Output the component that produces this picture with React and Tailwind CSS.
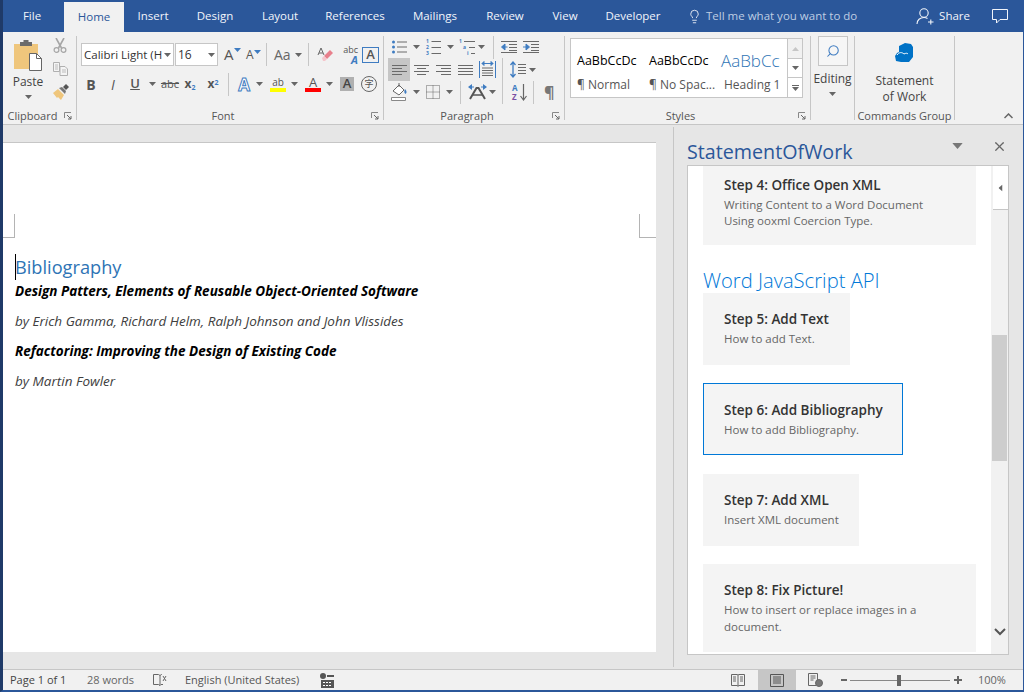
import React from "react";
import { Lightbulb, X, Search } from "lucide-react";

const GRAY = "#6a6a6a";

function Caret({ className = "", color = "#666" }) {
  return (
    <svg width="7" height="4" viewBox="0 0 7 4" className={`shrink-0 ${className}`}>
      <path d="M0 0h7L3.5 4z" fill={color} />
    </svg>
  );
}

function Sep({ className = "" }) {
  return <div className={`w-px h-[23px] bg-[#c6c6c6] shrink-0 ${className}`} />;
}

function Launcher() {
  return (
    <svg width="8" height="8" viewBox="0 0 8 8" className="shrink-0">
      <path d="M.5 6V.5H7" fill="none" stroke="#888" />
      <path d="M3 3l4 4M7 4v3H4" fill="none" stroke="#666" />
    </svg>
  );
}

function Lines({ className = "", rows, w = 15 }) {
  return (
    <svg width={w} height="12" viewBox={`0 0 ${w} 12`} className={`shrink-0 ${className}`}>
      {rows.map(([x, len], i) => (
        <path key={i} d={`M${x} ${1.5 + i * 3}h${len}`} stroke={GRAY} strokeWidth="1" />
      ))}
    </svg>
  );
}

function Bullets({ className = "" }) {
  return (
    <svg width="15" height="14" viewBox="0 0 15 14" className={`shrink-0 ${className}`}>
      {[2, 7, 12].map((y) => (
        <g key={y}>
          <circle cx="1.5" cy={y} r="1.5" fill="#3f7cc1" />
          <path d={`M5 ${y}h10`} stroke={GRAY} />
        </g>
      ))}
    </svg>
  );
}

function Numbering({ className = "" }) {
  return (
    <svg width="15" height="18" viewBox="0 0 15 18" className={`shrink-0 ${className}`}>
      {[1, 7, 13].map((y, i) => (
        <g key={y}>
          <text x="0" y={y + 4} fontSize="5" fontWeight="700" fill="#3f7cc1">{i + 1}</text>
          <path d={`M5.500 ${y + 2.5}h9.500`} stroke={GRAY} />
        </g>
      ))}
    </svg>
  );
}

function Multilevel({ className = "" }) {
  return (
    <svg width="16" height="18" viewBox="0 0 16 18" className={`shrink-0 ${className}`}>
      <text x="0" y="5" fontSize="5" fontWeight="700" fill="#3f7cc1">1</text>
      <path d="M5 3.500h11" stroke={GRAY} />
      <text x="4" y="11" fontSize="5" fontWeight="700" fill="#3f7cc1">a</text>
      <path d="M10 9.500h6" stroke={GRAY} />
      <text x="8" y="17" fontSize="5" fontWeight="700" fill="#3f7cc1">i</text>
      <path d="M12 15.500h4" stroke={GRAY} />
    </svg>
  );
}

function Indent({ className = "", flip = false }) {
  return (
    <svg width="16" height="12" viewBox="0 0 16 12" className={`shrink-0 ${className}`}>
      <path d="M0 .5h16M8 3.500h8M8 6.500h8M8 9.500h8M0 11.500h16" stroke={GRAY} />
      {flip ? (
        <path d="M0 6h4M3 3l3.500 3L3 9z" fill="#3f7cc1" stroke="#3f7cc1" />
      ) : (
        <path d="M6.500 6h-3M4 3L.5 6 4 9z" fill="#3f7cc1" stroke="#3f7cc1" />
      )}
    </svg>
  );
}

function Scissors({ className = "" }) {
  return (
    <svg width="14" height="15" viewBox="0 0 14 15" className={`shrink-0 ${className}`}>
      <path d="M3 0l5.500 10M11 0L5.500 10" fill="none" stroke="#a6a6a6" strokeWidth="1.600" />
      <circle cx="3.500" cy="12" r="2.400" fill="none" stroke="#a6a6a6" strokeWidth="1.200" />
      <circle cx="10.500" cy="12" r="2.400" fill="none" stroke="#a6a6a6" strokeWidth="1.200" />
    </svg>
  );
}

function CopyIcon({ className = "" }) {
  return (
    <svg width="15" height="14" viewBox="0 0 15 14" className={`shrink-0 ${className}`}>
      <path d="M.5.500h6v9h-6z M7 4.500h5l2.500 2.500v6.500h-7.500z" fill="#f4f4f4" stroke="#b0b0b0" />
      <path d="M2 3h3M2 5h3M2 7h3M9 8h4M9 10h4" stroke="#bcbcbc" />
    </svg>
  );
}

function Painter({ className = "" }) {
  return (
    <svg width="16" height="16" viewBox="0 0 16 16" className={`shrink-0 ${className}`}>
      <path d="M0 9l5-4 6 6-3 5-3-3-1 1z" fill="#efc67c" />
      <path d="M6 4l3-1 4 4-1 3z" fill="#777" />
      <path d="M10 3l3-3 3 3-3 3z" fill="#555" />
    </svg>
  );
}

function PasteIcon() {
  return (
    <svg width="28" height="31" viewBox="0 0 28 31" className="shrink-0">
      <path d="M0 4h24v25H0z" fill="#efc67c" />
      <path d="M6 4V2h3.500V0h5v2H18v4H6z" fill="#6b6b6b" />
      <path d="M15.500 13.500h7l5 5v12h-12z" fill="#fff" stroke="#666" />
      <path d="M22.500 13.500v5h5" fill="none" stroke="#666" />
    </svg>
  );
}

function Align({ kind, className = "" }) {
  const rows = {
    left: [[0, 15], [0, 10], [0, 15], [0, 10]],
    center: [[0, 15], [3, 9], [0, 15], [3, 9]],
    right: [[0, 15], [5, 10], [0, 15], [5, 10]],
    justify: [[0, 15], [0, 15], [0, 15], [0, 15]],
  }[kind];
  return <Lines rows={rows} className={className} />;
}

function Distributed({ className = "" }) {
  return (
    <svg width="17" height="17" viewBox="0 0 17 17" className={`shrink-0 ${className}`}>
      <path d="M.5 0v17M16.500 0v17" stroke="#3f7cc1" />
      <path d="M3 2.500h11M3 2.500l2-2v4zM14 2.500l-2-2v4z" stroke="#3f7cc1" fill="#3f7cc1" />
      <path d="M3 7h11M3 9.500h11M3 12h11M3 14.500h11" stroke={GRAY} />
    </svg>
  );
}

function LineSpacing({ className = "" }) {
  return (
    <svg width="16" height="17" viewBox="0 0 16 17" className={`shrink-0 ${className}`}>
      <path d="M3 1v15M.5 4L3 1l2.500 3M.5 13L3 16l2.500-3" fill="none" stroke="#3f7cc1" strokeWidth="1.300" />
      <path d="M8 3.500h8M8 6.500h8M8 9.500h8M8 12.500h8" stroke={GRAY} />
    </svg>
  );
}

function Shading({ className = "" }) {
  return (
    <svg width="17" height="18" viewBox="0 0 17 18" className={`shrink-0 ${className}`}>
      <path d="M2 8l6-6 5 5-5 5z" fill="#fff" stroke="#666" />
      <path d="M8 0v4" stroke="#666" />
      <path d="M14 6c2 2 2 4 .5 5C13 10 13 8 14 6z" fill="#3f7cc1" />
      <path d="M.5 14.500h14v3H.5z" fill="#fff" stroke="#888" />
    </svg>
  );
}

function Borders({ className = "" }) {
  return (
    <svg width="14" height="14" viewBox="0 0 14 14" className={`shrink-0 ${className}`}>
      <path d="M.5.500h13v13H.5zM7 .5v13M.5 7h13" fill="none" stroke="#666" strokeDasharray="1 1" />
    </svg>
  );
}

function TextDir({ className = "" }) {
  return (
    <svg width="19" height="16" viewBox="0 0 19 16" className={`shrink-0 ${className}`}>
      <path d="M2 15L8.500 4h2L17 15" fill="none" stroke="#555" strokeWidth="2" />
      <path d="M5 11h9" stroke="#555" strokeWidth="1.500" />
      <path d="M0 3l4-3v6zM19 3l-4-3v6z" fill="#3f7cc1" />
      <path d="M3 3h3M13 3h3" stroke="#3f7cc1" />
    </svg>
  );
}

function SortIcon({ className = "" }) {
  return (
    <div className={`flex shrink-0 items-center ${className}`}>
      <div className="flex flex-col text-[8px] leading-[9px] font-bold w-[8px]">
        <span className="text-[#3f7cc1]">A</span>
        <span className="text-[#7a4fa3]">Z</span>
      </div>
      <svg width="7" height="17" viewBox="0 0 7 17">
        <path d="M3.500 0v16M.5 12l3 4 3-4" fill="none" stroke="#666" strokeWidth="1.200" />
      </svg>
    </div>
  );
}

function Group({ widthClass, label, launcher, children }) {
  return (
    <div className={`${widthClass} shrink-0 mt-[4px] h-[84px] border-r border-[#c6c6c6] flex flex-col`}>
      <div className="h-[73px] shrink-0">{children}</div>
      <div className="h-[14px] shrink-0 flex items-center text-[11px] text-[#555]">
        <div className="flex-1 text-center whitespace-nowrap">{label}</div>
        {launcher && <div className="mr-[4px] ml-[2px]"><Launcher /></div>}
      </div>
    </div>
  );
}

function Tab({ widthClass, active, children }) {
  return (
    <div
      className={`${widthClass} shrink-0 flex items-center justify-center text-[11.500px] ${
        active ? "h-[30px] mt-[2px] bg-[#f1f1f1] text-[#2b579a]" : "h-[32px] text-[#f2f5fa]"
      }`}
    >
      {children}
    </div>
  );
}

function StyleItem({ sample, label, sampleClass, labelClass = "" }) {
  return (
    <div className="w-[72px] shrink-0 flex flex-col pl-[6px]">
      <div className={`w-[59px] h-[34px] pt-[12px] whitespace-nowrap leading-[20px] ${sampleClass}`}>{sample}</div>
      <div className={`text-[12px] text-[#555] whitespace-nowrap mt-[3px] ${labelClass}`}>{label}</div>
    </div>
  );
}

function StepCard({ title, desc, widthClass, selected }) {
  return (
    <div
      className={`${widthClass} h-[72px] shrink-0 bg-[#f4f4f4] pt-[17px] ${
        selected ? "border border-[#0078d7] pl-[20px]" : "pl-[21px]"
      }`}
    >
      <div className="text-[13.500px] font-semibold leading-[18px] text-[#333] whitespace-nowrap">{title}</div>
      <div className="text-[11.500px] leading-[16px] mt-[3px] text-[#666] whitespace-nowrap">{desc}</div>
    </div>
  );
}

function TabBar() {
  return (
    <div className="h-[32px] shrink-0 bg-[#2b579a] flex">
      <Tab widthClass="w-[58px]">File</Tab>
      <div className="w-[3px]" />
      <Tab widthClass="w-[60px]" active>Home</Tab>
      <Tab widthClass="w-[58px]">Insert</Tab>
      <Tab widthClass="w-[66px]">Design</Tab>
      <Tab widthClass="w-[64px]">Layout</Tab>
      <Tab widthClass="w-[86px]">References</Tab>
      <Tab widthClass="w-[74px]">Mailings</Tab>
      <Tab widthClass="w-[66px]">Review</Tab>
      <Tab widthClass="w-[54px]">View</Tab>
      <Tab widthClass="w-[82px]">Developer</Tab>
      <div className="flex items-center ml-[13px] text-[11.500px] text-[#bfcde3]">
        <Lightbulb size={15} strokeWidth={1.400} color="#f2f5fa" />
        <span className="ml-[4px]">Tell me what you want to do</span>
      </div>
      <div className="ml-auto flex items-center text-[11.500px] text-[#f2f5fa]">
        <svg width="18" height="17" viewBox="0 0 18 17" fill="none" stroke="#f2f5fa" strokeWidth="1.100">
          <circle cx="8" cy="5" r="4.200" />
          <path d="M1 16c0-4 3-6.500 7-6.500 1.500 0 2.500.3 3.500 1M12 14h5.500M14.800 11.500v5" />
        </svg>
        <span className="ml-[5px]">Share</span>
        <svg width="16" height="15" viewBox="0 0 16 15" fill="none" stroke="#f2f5fa" className="ml-[22px] mr-[15px]">
          <path d="M.5.500h15v10H8l-3.500 3.500v-3.500H.5z" />
        </svg>
      </div>
    </div>
  );
}

function Ribbon() {
  return (
    <div className="h-[93px] shrink-0 bg-[#f1f1f1] border-b border-[#c6c6c6] flex text-[#444]">
      <Group widthClass="w-[74px]" label="Clipboard" launcher>
        <div className="flex h-full">
          <div className="w-[50px] flex flex-col items-center pt-[4px]">
            <PasteIcon />
            <div className="text-[12px] leading-[16px] mt-[3px]">Paste</div>
            <Caret className="mt-[5px]" />
          </div>
          <div className="flex flex-col pt-[2px]">
            <Scissors />
            <CopyIcon className="mt-[9px]" />
            <Painter className="mt-[8px]" />
          </div>
        </div>
      </Group>

      <Group widthClass="w-[307px]" label="Font" launcher>
        <div className="pt-[7px]">
          <div className="flex items-center h-[23px]">
            <div className="ml-[4px] w-[93px] h-[23px] bg-white border border-[#c6c6c6] flex items-center text-[11.500px] text-[#333] pl-[2px]">
              <span className="w-[80px] whitespace-nowrap">Calibri Light (H</span>
              <Caret />
            </div>
            <div className="ml-px w-[43px] h-[23px] bg-white border border-[#c6c6c6] flex items-center text-[12px] text-[#333] pl-[2px]">
              <span className="w-[30px]">16</span>
              <Caret />
            </div>
            <div className="ml-[6px] w-[16px] flex items-start">
              <span className="text-[15px] leading-none text-[#555]">A</span>
              <Caret className="mt-[1px]" color="#3f7cc1" />
            </div>
            <div className="ml-[6px] w-[14px] flex items-start">
              <span className="text-[12px] leading-none text-[#555]">A</span>
              <Caret className="mt-[1px]" color="#3f7cc1" />
            </div>
            <Sep className="ml-[6px]" />
            <span className="ml-[7px] w-[18px] text-[14px] text-[#666] whitespace-nowrap">Aa</span>
            <Caret className="ml-[3px]" />
            <Sep className="ml-[6px]" />
            <svg width="16" height="16" viewBox="0 0 16 16" className="ml-[8px] shrink-0">
              <path d="M7 9l6-6 3 3-6 6z" fill="#e8808c" />
              <path d="M5 11l2-2 3 3-2 2H6z" fill="#f5c6cc" />
              <path d="M1 8L4 1l3 7M2 6h4" fill="none" stroke="#666" />
            </svg>
            <div className="ml-[7px] w-[18px] flex flex-col items-end">
              <span className="text-[9px] leading-[9px] text-[#555]">abc</span>
              <span className="text-[11px] leading-[11px] font-bold italic text-[#3f7cc1]">A</span>
            </div>
            <div className="ml-[4px] w-[17px] h-[16px] border border-[#3f7cc1] flex items-center justify-center text-[13px] font-semibold text-[#555]">A</div>
          </div>
          <div className="flex items-center h-[22px] mt-[7px] text-[#555]">
            <span className="ml-[7px] w-[14px] text-center text-[14px] font-bold">B</span>
            <span className="ml-[8px] w-[14px] text-center text-[14px] italic">I</span>
            <span className="ml-[8px] w-[14px] text-center text-[13px] font-semibold underline">U</span>
            <Caret className="ml-[7px]" />
            <span className="ml-[4px] w-[20px] text-center text-[11px] line-through">abc</span>
            <span className="ml-[2px] w-[16px] text-center text-[12px] font-bold">x<sub className="text-[7px] text-[#3f7cc1]">2</sub></span>
            <span className="ml-[7px] w-[16px] text-center text-[12px] font-bold">x<sup className="text-[7px] text-[#3f7cc1]">2</sup></span>
            <Sep className="ml-[7px]" />
            <span className="ml-[6px] w-[18px] text-center text-[17px] leading-none font-bold text-white [-webkit-text-stroke:1px_#3f7cc1]">A</span>
            <Caret className="ml-[3px]" />
            <div className="ml-[7px] w-[16px] flex flex-col items-center">
              <span className="text-[10px] leading-[12px] text-[#555]">ab</span>
              <div className="w-[16px] h-[4px] bg-[#ffff00]" />
            </div>
            <Caret className="ml-[5px]" />
            <div className="ml-[7px] w-[16px] flex flex-col items-center">
              <span className="text-[13px] leading-[12px] text-[#555]">A</span>
              <div className="w-[16px] h-[4px] bg-[#ff0000]" />
            </div>
            <Caret className="ml-[5px]" />
            <div className="ml-[7px] w-[14px] h-[14px] bg-[#b0b0b0] flex items-center justify-center text-[13px] font-semibold text-[#444]">A</div>
            <div className="ml-[7px] w-[16px] h-[16px] rounded-full border border-[#666] flex items-center justify-center text-[9px] font-['Noto_Sans_CJK_SC',sans-serif] text-[#555]">字</div>
          </div>
        </div>
      </Group>

      <Group widthClass="w-[181px]" label="Paragraph" launcher>
        <div className="flex items-center h-[22px]">
          <Bullets className="ml-[8px]" />
          <Caret className="ml-[6px]" />
          <Numbering className="ml-[6px]" />
          <Caret className="ml-[6px]" />
          <Multilevel className="ml-[5px]" />
          <Caret className="ml-[3px]" />
          <Sep className="ml-[8px]" />
          <Indent className="ml-[7px]" />
          <Indent className="ml-[6px]" flip />
        </div>
        <div className="flex items-center h-[23px]">
          <div className="ml-[4px] w-[22px] h-[23px] bg-[#c6c6c6] flex items-center justify-center shrink-0">
            <Align kind="left" />
          </div>
          <Align kind="center" className="ml-[4px]" />
          <Align kind="right" className="ml-[7px]" />
          <Align kind="justify" className="ml-[7px]" />
          <Distributed className="ml-[6px]" />
          <Sep className="ml-[6px]" />
          <LineSpacing className="ml-[7px]" />
          <Caret className="ml-[3px]" />
        </div>
        <div className="flex items-center h-[22px]">
          <Shading className="ml-[7px]" />
          <Caret className="ml-[5px]" />
          <Borders className="ml-[6px]" />
          <Caret className="ml-[6px]" />
          <Sep className="ml-[7px]" />
          <TextDir className="ml-[7px]" />
          <Caret className="ml-[2px]" />
          <Sep className="ml-[6px]" />
          <SortIcon className="ml-[9px]" />
          <Sep className="ml-[6px]" />
          <span className="ml-[10px] text-[16px] leading-none font-bold text-[#777]">¶</span>
        </div>
      </Group>

      <Group widthClass="w-[246px]" label="Styles" launcher>
        <div className="ml-[5px] mt-[2px] w-[233px] h-[60px] bg-white border border-[#c6c6c6] flex">
          <StyleItem sample="AaBbCcDc" label="¶ Normal" sampleClass="text-[12.500px] text-black" />
          <StyleItem sample="AaBbCcDc" label="¶ No Spac..." sampleClass="text-[12.500px] text-black" />
          <StyleItem sample="AaBbCc" label="Heading 1" labelClass="ml-[3px]" sampleClass="text-[17px] font-light text-[#2e74b5]" />
          <div className="flex-1 flex flex-col border-l border-[#c6c6c6] bg-[#f1f1f1]">
            <div className="h-[20px] flex items-center justify-center border-b border-[#c6c6c6]">
              <Caret className="rotate-180" color="#c6c6c6" />
            </div>
            <div className="h-[19px] bg-white flex items-center justify-center border-b border-[#c6c6c6]">
              <Caret />
            </div>
            <div className="flex-1 bg-white flex flex-col items-center justify-center">
              <div className="w-[7px] h-px bg-[#666] mb-px" />
              <Caret />
            </div>
          </div>
        </div>
      </Group>

      <Group widthClass="w-[44px]" label="">
        <div className="flex flex-col items-center">
          <div className="w-[30px] h-[30px] border border-[#c6c6c6] bg-[#f6f6f6] flex items-center justify-center">
            <Search size={14} strokeWidth={1.800} color="#3f7cc1" className="-scale-x-100" />
          </div>
          <div className="text-[12px] leading-[16px] mt-[5px]">Editing</div>
          <Caret className="mt-[5px]" />
        </div>
      </Group>

      <Group widthClass="w-[100px]" label="Commands Group">
        <div className="flex flex-col items-center">
          <svg width="18" height="20" viewBox="0 0 18 20" className="mt-[7px] -ml-[2px]">
            <path d="M4 3l6-3 6 1 2 3v10l-4 5H6l-5-1-1-5 2-3 2-1z" fill="#0072c6" />
            <path d="M2 12c2-3 5-3 7-1M9 11c2-1 3-1 4 0" fill="none" stroke="#fff" />
          </svg>
          <div className="text-[12px] leading-[16px] mt-[10px] text-center">
            Statement
            <br />
            of Work
          </div>
        </div>
      </Group>

      <div className="flex-1 flex items-end justify-end pb-[5px] pr-[10px]">
        <svg width="9" height="6" viewBox="0 0 9 6" fill="none" stroke="#666" strokeWidth="1.500">
          <path d="M.5 5l4-4 4 4" />
        </svg>
      </div>
    </div>
  );
}

function Doc() {
  return (
    <div className="w-[653px] shrink-0 mt-[17px] h-[510px] bg-white border-t border-[#c6c6c6] pt-[71px]">
      <div className="flex justify-between h-[24px]">
        <div className="w-[12px] border-r border-b border-[#b4b4b4]" />
        <div className="w-[17px] border-l border-b border-[#b4b4b4]" />
      </div>
      <div className="pl-[12px] mt-[16px]">
        <div className="h-[26px] flex items-center">
          <div className="w-px h-[26px] bg-black shrink-0" />
          <div className="text-[18.200px] text-[#2e74b5] leading-[26px] -ml-px">Bibliography</div>
        </div>
        <div className="flex flex-col text-[13.500px] italic leading-[30px] -mt-[4px]">
          <div className="font-bold text-black">Design Patters, Elements of Reusable Object-Oriented Software</div>
          <div className="text-[#404040]">by Erich Gamma, Richard Helm, Ralph Johnson and John Vlissides</div>
          <div className="font-bold text-black">Refactoring: Improving the Design of Existing Code</div>
          <div className="text-[#404040]">by Martin Fowler</div>
        </div>
      </div>
    </div>
  );
}

function TaskPane() {
  return (
    <div className="flex-1 ml-[17px] mt-[2px] mb-[2px] border-l border-[#c6c6c6] pl-[13px] flex flex-col">
      <div className="h-[38px] shrink-0 flex items-center">
        <div className="text-[19.700px] text-[#2b579a] leading-[26px] mt-[11px]">StatementOfWork</div>
        <Caret className="ml-auto scale-150" color="#777" />
        <X size={15} strokeWidth={2} color="#666" className="ml-[31px] mr-[16px]" />
      </div>
      <div className="h-[490px] w-[322px] bg-white border border-[#c6c6c6] flex overflow-hidden">
        <div className="w-[303px] shrink-0 pl-[15px] flex flex-col">
          <div className="w-[273px] h-[79px] shrink-0 bg-[#f4f4f4] pl-[21px] pt-[10px]">
            <div className="text-[13.500px] font-semibold leading-[18px] text-[#333]">Step 4: Office Open XML</div>
            <div className="text-[11.500px] leading-[16px] mt-[3px] text-[#666]">
              Writing Content to a Word Document
              <br />
              Using ooxml Coercion Type.
            </div>
          </div>
          <div className="text-[20.200px] leading-[26px] text-[#0078d7] font-light mt-[22px] whitespace-nowrap">Word JavaScript API</div>
          <StepCard widthClass="w-[147px]" title="Step 5: Add Text" desc="How to add Text." />
          <div className="h-[18px] shrink-0" />
          <StepCard widthClass="w-[200px]" title="Step 6: Add Bibliography" desc="How to add Bibliography." selected />
          <div className="h-[19px] shrink-0" />
          <StepCard widthClass="w-[156px]" title="Step 7: Add XML" desc="Insert XML document" />
          <div className="h-[18px] shrink-0" />
          <div className="w-[273px] h-[88px] shrink-0 bg-[#f4f4f4] pl-[21px] pt-[17px]">
            <div className="text-[13.500px] font-semibold leading-[18px] text-[#333]">Step 8: Fix Picture!</div>
            <div className="text-[11.500px] leading-[17px] mt-[2px] text-[#666]">
              How to insert or replace images in a
              <br />
              document.
            </div>
          </div>
        </div>
        <div className="flex-1 bg-[#f1f1f1] flex flex-col items-center">
          <div className="w-[15px] self-end h-[44px] shrink-0 bg-white border-b border-[#c6c6c6] flex items-center justify-center">
            <Caret className="rotate-90" />
          </div>
          <div className="w-[15px] h-[126px] mt-[125px] shrink-0 bg-[#cdcdcd]" />
          <svg width="12" height="8" viewBox="0 0 12 8" fill="none" stroke="#555" strokeWidth="2" className="mt-[167px]">
            <path d="M1 1l5 5 5-5" />
          </svg>
        </div>
      </div>
    </div>
  );
}

function StatusBar() {
  return (
    <div className="h-[21px] shrink-0 bg-[#f1f1f1] border-t border-[#c6c6c6] flex items-center text-[11px] text-[#444]">
      <span className="ml-[7px] w-[77px]">Page 1 of 1</span>
      <span className="w-[66px] text-[#666]">28 words</span>
      <svg width="14" height="14" viewBox="0 0 14 14" fill="none" stroke="#666" className="shrink-0">
        <path d="M.5 1.500h5l1.500 1v10l-1.500-1h-5zM7 2.500l1.500-1H9M7 12.500l1-1h2" />
        <path d="M10 3l3 5M13 3l-3 5" />
      </svg>
      <span className="ml-[18px] w-[135px] text-[#555]">English (United States)</span>
      <svg width="14" height="15" viewBox="0 0 14 15" className="shrink-0">
        <circle cx="3" cy="3" r="3" fill="#555" />
        <path d="M7 2h7v2H7zM1 7h13v8H1z" fill="#555" />
        <path d="M3 9.500h9M3 12.500h9" stroke="#fff" strokeDasharray="2 1" />
      </svg>
      <svg width="14" height="13" viewBox="0 0 14 13" fill="none" stroke="#666" className="ml-auto shrink-0">
        <path d="M.5.500h6l.5 1 .5-1h6v11h-6l-.5 1-.5-1h-6zM7 1.500v10M2 3h3M2 5h3M2 7h3M9 3h3M9 5h3M9 7h3" />
      </svg>
      <div className="ml-[13px] w-[38px] h-[20px] bg-[#c6c6c6] flex items-center justify-center shrink-0">
        <svg width="14" height="13" viewBox="0 0 14 13" fill="none" stroke="#555">
          <path d="M.5.500h13v12H.5zM3 3h8M3 5h8M3 7h8M3 9h8" />
        </svg>
      </div>
      <svg width="15" height="14" viewBox="0 0 15 14" fill="none" stroke="#666" className="ml-[12px] shrink-0">
        <path d="M8 12.500H.5V.500h9V7M2.500 3h5M2.500 5h5M2.500 7h3" />
        <circle cx="11" cy="10" r="3.500" fill="#777" />
      </svg>
      <div className="ml-[18px] w-[6px] h-[2px] bg-[#666] shrink-0" />
      <div className="ml-[3px] w-[100px] h-px bg-[#888] flex justify-center items-center shrink-0">
        <div className="w-[4px] h-[11px] bg-[#666] -ml-[2px]" />
      </div>
      <div className="ml-[4px] w-[8px] h-[8px] shrink-0 flex items-center justify-center relative">
        <div className="w-[8px] h-[2px] bg-[#666]" />
        <div className="absolute w-[2px] h-[8px] bg-[#666]" />
      </div>
      <span className="ml-[16px] mr-[18px] w-[27px] text-[#666] whitespace-nowrap">100%</span>
    </div>
  );
}

export default function App() {
  return (
    <div className="w-[1024px] h-[692px] overflow-hidden flex flex-col bg-[#e6e6e6] border-l-[3px] border-l-[#1f3a68] border-r border-r-[#2b579a] border-b-2 border-b-[#2b579a] font-['Open_Sans','Noto_Sans',sans-serif]">
      <TabBar />
      <Ribbon />
      <div className="flex-1 flex min-h-0">
        <Doc />
        <TaskPane />
      </div>
      <StatusBar />
    </div>
  );
}
